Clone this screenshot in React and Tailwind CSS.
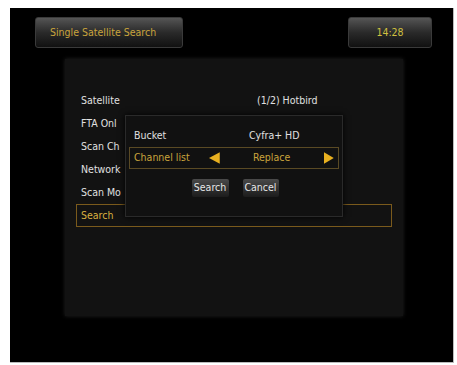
const font = { fontFamily: '"Liberation Sans Narrow", "DejaVu Sans Condensed", "Liberation Sans", sans-serif' };

function Row({ label, value, active }) {
  return (
    <div
      className={
        'flex h-[23px] items-center px-[4px] text-[10.5px] ' +
        (active ? 'border border-[#7a5a1c] text-[#d8b040]' : 'border border-transparent text-[#e0e0e0]')
      }
    >
      <span className="w-[176px] whitespace-nowrap">{label}</span>
      <span>{value}</span>
    </div>
  );
}

export default function App() {
  return (
    <div className="h-[365px] w-[457px] bg-white pl-[10px] pt-[8px]" style={font}>
      <div className="relative h-[355px] w-[444px] border-r border-b border-[#bbb] bg-black">
        <div className="flex items-start justify-between pl-[25px] pr-[21px] pt-[9px]">
          <div className="flex h-[31px] w-[148px] items-center rounded-[3px] border border-[#3a3a3a] bg-gradient-to-b from-[#555] via-[#2a2a2a] to-[#111] pl-[14px] text-[10.5px] text-[#c9a43c]">
            Single Satellite Search
          </div>
          <div className="flex h-[31px] w-[84px] items-center justify-center rounded-[3px] border border-[#3a3a3a] bg-gradient-to-b from-[#555] via-[#2a2a2a] to-[#111] text-[10.5px] text-[#d0c040]">
            14:28
          </div>
        </div>

        <div className="relative ml-[55px] mt-[11px] h-[257px] w-[338px] bg-[#121212] shadow-[0_0_4px_#222]">
          <div className="px-[11px] pt-[30px]">
            <Row label="Satellite" value="(1/2) Hotbird" />
            <Row label="FTA Onl" />
            <Row label="Scan Ch" />
            <Row label="Network" />
            <Row label="Scan Mo" />
            <Row label="Search" active />
          </div>

          <div className="absolute left-[60px] top-[56px] h-[102px] w-[218px] border border-[#2a2a2a] bg-[#111] px-[3px] pt-[9px] shadow-[0_0_6px_#000]">
            <div className="flex h-[22px] items-center px-[5px] text-[10.5px] text-[#e0e0e0]">
              <span className="w-[115px]">Bucket</span>
              <span>Cyfra+ HD</span>
            </div>
            <div className="flex h-[22px] items-center border border-[#5a4a24] px-[4px] text-[10.5px] text-[#c9a43c]">
              <span className="w-[77px]">Channel list</span>
              <svg width="11" height="12" viewBox="0 0 11 12"><polygon points="11,0 11,12 0,6" fill="#e8b020" /></svg>
              <span className="ml-[33px] w-[73px]">Replace</span>
              <svg width="10" height="12" viewBox="0 0 10 12"><polygon points="0,0 0,12 10,6" fill="#e8b020" /></svg>
            </div>
            <div className="mt-[10px] flex justify-center gap-[14px] pl-[2px]">
              <div className="flex h-[18px] w-[37px] items-center justify-center rounded-[2px] bg-gradient-to-b from-[#4a4a4a] to-[#1c1c1c] text-[10.5px] text-[#e6e6e6]">
                Search
              </div>
              <div className="flex h-[18px] w-[36px] items-center justify-center rounded-[2px] bg-gradient-to-b from-[#4a4a4a] to-[#1c1c1c] text-[10.5px] text-[#e6e6e6]">
                Cancel
              </div>
            </div>
          </div>
        </div>
      </div>
    </div>
  );
}
